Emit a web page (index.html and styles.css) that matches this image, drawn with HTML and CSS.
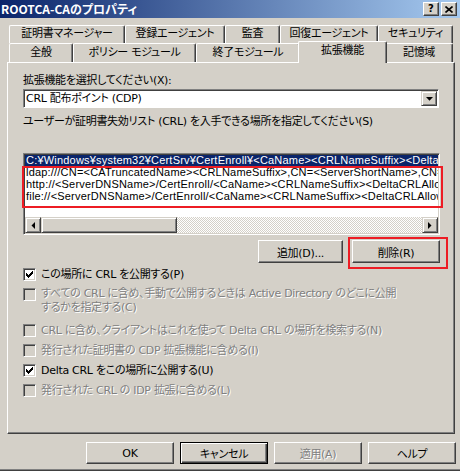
FILE: index.html
```html
<!DOCTYPE html>
<html lang="ja">
<head>
<meta charset="utf-8">
<title>ROOTCA-CAのプロパティ</title>
<link rel="stylesheet" href="styles.css">
</head>
<body>
<div class="window">
  <div class="titlebar">
    <span class="title">ROOTCA-CAのプロパティ</span>
    <div class="tbtns">
      <span class="tbtn">?</span>
      <span class="tbtn"><svg width="8" height="7" viewBox="0 0 8 7"><path d="M0.5 0.5 L7.5 6.5 M7.5 0.5 L0.5 6.5" stroke="#000" stroke-width="1.6" fill="none"/></svg></span>
    </div>
  </div>

  <div class="tabs">
    <div class="tabrow back">
      <div class="tab t-cert">証明書マネージャー</div>
      <div class="tab t-enroll">登録エージェント</div>
      <div class="tab t-audit">監査</div>
      <div class="tab t-recov">回復エージェント</div>
      <div class="tab t-sec">セキュリティ</div>
    </div>
    <div class="tabrow front">
      <div class="tab t-gen">全般</div>
      <div class="tab t-pol">ポリシー モジュール</div>
      <div class="tab t-exit">終了モジュール</div>
      <div class="tab sel">拡張機能</div>
      <div class="tab t-store">記憶域</div>
    </div>
  </div>

  <div class="panel">
    <div class="label">拡張機能を選択してください(X):</div>
    <div class="combo">
      <span class="combo-text">CRL 配布ポイント (CDP)</span>
      <span class="combo-btn"><svg width="7" height="4" viewBox="0 0 7 4"><polygon points="0,0 7,0 3.5,3.8" fill="#000"/></svg></span>
    </div>
    <div class="label label2">ユーザーが証明書失効リスト (CRL) を入手できる場所を指定してください(S)</div>

    <div class="list">
      <div class="rows">
        <div class="row selected">C:¥Windows¥system32¥CertSrv¥CertEnroll¥&lt;CaName&gt;&lt;CRLNameSuffix&gt;&lt;DeltaCRLAllowed&gt;.crl</div>
        <div class="row">ldap:///CN=&lt;CATruncatedName&gt;&lt;CRLNameSuffix&gt;,CN=&lt;ServerShortName&gt;,CN=CDP,CN=Public Key Services</div>
        <div class="row">http://&lt;ServerDNSName&gt;/CertEnroll/&lt;CaName&gt;&lt;CRLNameSuffix&gt;&lt;DeltaCRLAllowed&gt;.crl</div>
        <div class="row">file://&lt;ServerDNSName&gt;/CertEnroll/&lt;CaName&gt;&lt;CRLNameSuffix&gt;&lt;DeltaCRLAllowed&gt;.crl</div>
      </div>
      <div class="hscroll">
        <span class="sbtn"><svg width="4" height="7" viewBox="0 0 4 7"><polygon points="4,0 4,7 0.5,3.5" fill="#000"/></svg></span>
        <span class="thumb"></span>
        <span class="track"></span>
        <span class="sbtn"><svg width="4" height="7" viewBox="0 0 4 7"><polygon points="0,0 0,7 3.5,3.5" fill="#000"/></svg></span>
      </div>
      <div class="mark mark-list"></div>
    </div>

    <div class="btnrow">
      <span class="btn btn-add">追加(D)...</span>
      <span class="btn btn-del">削除(R)<span class="mark mark-del"></span></span>
    </div>

    <div class="checks">
      <div class="check c1">
        <span class="box"><svg width="7" height="7" viewBox="0 0 7 7"><path d="M0 2h1v1h1v1h1v-1h1v-1h1v-1h1v-1h1v3h-1v1h-1v1h-1v1h-1v1h-1v-1h-1v-1h-1z" fill="#000"/></svg></span>
        <span class="ctext">この場所に CRL を公開する(P)</span>
      </div>
      <div class="check c2 disabled">
        <span class="box"></span>
        <span class="ctext">すべての CRL に含め、手動で公開するときは Active Directory のどこに公開<br>するかを指定する(C)</span>
      </div>
      <div class="check disabled">
        <span class="box"></span>
        <span class="ctext">CRL に含め、クライアントはこれを使って Delta CRL の場所を検索する(N)</span>
      </div>
      <div class="check disabled">
        <span class="box"></span>
        <span class="ctext">発行された証明書の CDP 拡張機能に含める(I)</span>
      </div>
      <div class="check">
        <span class="box"><svg width="7" height="7" viewBox="0 0 7 7"><path d="M0 2h1v1h1v1h1v-1h1v-1h1v-1h1v-1h1v3h-1v1h-1v1h-1v1h-1v1h-1v-1h-1v-1h-1z" fill="#000"/></svg></span>
        <span class="ctext">Delta CRL をこの場所に公開する(U)</span>
      </div>
      <div class="check disabled">
        <span class="box"></span>
        <span class="ctext">発行された CRL の IDP 拡張に含める(L)</span>
      </div>
    </div>
  </div>

  <div class="footer">
    <span class="btn fbtn">OK</span>
    <span class="btn fbtn default">キャンセル</span>
    <span class="btn fbtn disabled-btn">適用(A)</span>
    <span class="btn fbtn">ヘルプ</span>
  </div>
</div>
</body>
</html>
```

FILE: styles.css
```css
* { box-sizing: border-box; }
html, body { margin: 0; padding: 0; }
body {
  width: 460px;
  height: 471px;
  overflow: hidden;
  background: #d4d0c8;
  font-family: "DejaVu Sans", "Noto Sans CJK JP", sans-serif;
  font-feature-settings: "palt";
  font-size: 11px;
  letter-spacing: -0.3px;
  color: #000;
}
.window {
  width: 460px;
  height: 471px;
  display: flex;
  flex-direction: column;
  box-shadow: inset 0 -1px #404040, inset 0 -2px #808080;
}

/* title bar */
.titlebar {
  height: 18px;
  flex: none;
  display: flex;
  align-items: center;
  justify-content: space-between;
  padding: 0 3px 0 1px;
  background: linear-gradient(to right, #0a246a, #a6caf0);
}
.title {
  color: #fff;
  font-family: "Noto Sans CJK JP", sans-serif;
  font-weight: bold;
  font-size: 12px;
  letter-spacing: 0;
  line-height: 16px;
  white-space: nowrap;
}
.tbtns { display: flex; gap: 2px; }
.tbtn {
  width: 16px;
  height: 14px;
  display: flex;
  align-items: center;
  justify-content: center;
  background: #d4d0c8;
  border: 1px solid;
  border-color: #fff #404040 #404040 #fff;
  box-shadow: inset -1px -1px #808080;
  font-family: "DejaVu Sans", sans-serif;
  font-weight: bold;
  font-size: 10px;
  letter-spacing: 0;
  line-height: 12px;
}

/* tabs */
.tabs { margin-top: 7px; flex: none; }
.tabrow { display: flex; padding-left: 9px; }
.back { height: 18px; }
.front { height: 19px; align-items: flex-end; }
.tab {
  flex: none;
  height: 18px;
  border: 1px solid;
  border-color: #fff #404040 transparent #fff;
  border-bottom: none;
  border-radius: 2px 2px 0 0;
  box-shadow: inset -1px 0 #808080;
  background: #d4d0c8;
  text-align: center;
  line-height: 16px;
  white-space: nowrap;
}
.front .tab { height: 19px; line-height: 17px; }
.t-cert { width: 116px; }
.t-enroll { width: 100px; }
.t-audit { width: 55px; }
.t-recov { width: 98px; }
.t-sec { width: 75px; }
.t-gen { width: 64px; }
.t-pol { width: 123px; }
.t-exit { width: 104px; }
.t-store { width: 68px; }
.front .tab.sel {
  position: relative;
  z-index: 1;
  width: 89px;
  height: 22px;
  margin: 0 -2px -1px -2px;
  line-height: 17px;
}

/* panel */
.panel {
  flex: none;
  margin-left: 7px;
  width: 448px;
  height: 372px;
  border: 1px solid;
  border-color: #fff #404040 #404040 #fff;
  box-shadow: inset -1px -1px #808080;
  padding: 11px 14px 0 15px;
}
.label { height: 13px; line-height: 13px; white-space: nowrap; }
.label2 { margin-top: 7px; }

.combo {
  margin-top: 2px;
  width: 416px;
  height: 19px;
  display: flex;
  align-items: center;
  justify-content: space-between;
  background: #fff;
  border: 1px solid;
  border-color: #808080 #fff #fff #808080;
  box-shadow: inset 1px 1px #404040;
  padding: 0 1px 0 2px;
}
.combo-text { line-height: 15px; }
.combo-btn {
  width: 16px;
  height: 15px;
  display: flex;
  align-items: center;
  justify-content: center;
  background: #d4d0c8;
  border: 1px solid;
  border-color: #d4d0c8 #404040 #404040 #d4d0c8;
  box-shadow: inset 1px 1px #fff, inset -1px -1px #808080;
}

.list {
  position: relative;
  margin-top: 25px;
  width: 417px;
  height: 82px;
  display: flex;
  flex-direction: column;
  background: #fff;
  border: 1px solid;
  border-color: #808080 #fff #fff #808080;
  box-shadow: inset 1px 1px #404040, inset -1px -1px #d4d0c8;
  padding: 1px;
}
.rows { flex: 1; overflow: hidden; }
.row {
  height: 12px;
  line-height: 12px;
  white-space: nowrap;
  overflow: hidden;
  padding-left: 1px;
  font-family: "Liberation Sans", "Noto Sans CJK JP", sans-serif;
  font-size: 11px;
  letter-spacing: 0.2px;
}
.row.selected { background: #0a246a; color: #fff; height: 11px; line-height: 11px; }
.hscroll { flex: none; height: 16px; display: flex; }
.sbtn {
  flex: none;
  width: 16px;
  height: 16px;
  display: flex;
  align-items: center;
  justify-content: center;
  background: #d4d0c8;
  border: 1px solid;
  border-color: #d4d0c8 #404040 #404040 #d4d0c8;
  box-shadow: inset 1px 1px #fff, inset -1px -1px #808080;
}
.thumb {
  flex: none;
  width: 136px;
  height: 16px;
  background: #d4d0c8;
  border: 1px solid;
  border-color: #d4d0c8 #404040 #404040 #d4d0c8;
  box-shadow: inset 1px 1px #fff, inset -1px -1px #808080;
}
.track {
  flex: 1;
  background-color: #d4d0c8;
  background-image: repeating-conic-gradient(#fff 0 25%, #d4d0c8 0 50%);
  background-size: 2px 2px;
}

.mark { position: absolute; border: 2px solid #ed1c24; pointer-events: none; }
.mark-list { left: -2px; right: -4px; top: 12px; height: 42px; }

.btnrow {
  margin-top: 5px;
  width: 417px;
  display: flex;
  justify-content: flex-end;
  gap: 9px;
}
.btn {
  position: relative;
  display: flex;
  align-items: center;
  justify-content: center;
  height: 23px;
  background: #d4d0c8;
  border: 1px solid;
  border-color: #fff #404040 #404040 #fff;
  box-shadow: inset -1px -1px #808080;
  white-space: nowrap;
}
.btn-add { width: 85px; }
.btn-del { width: 88px; }
.mark-del { left: -5px; right: -9px; top: -4px; bottom: -7px; }

.checks { margin-top: 5px; }
.check { display: flex; align-items: flex-start; height: 20px; }
.check.c2 { height: 36px; }
.box {
  flex: none;
  width: 13px;
  height: 13px;
  display: flex;
  align-items: center;
  justify-content: center;
  background: #fff;
  border: 1px solid;
  border-color: #808080 #fff #fff #808080;
  box-shadow: inset 1px 1px #404040, inset -1px -1px #d4d0c8;
}
.ctext { margin-left: 5px; line-height: 13px; white-space: nowrap; }
.c2 .ctext { line-height: 14px; margin-top: -1px; }
.disabled .box { background: #d4d0c8; }
.disabled .ctext, .disabled-btn { color: #808080; text-shadow: 1px 1px 0 #fff; }

.footer {
  flex: none;
  margin-top: 8px;
  display: flex;
  justify-content: flex-end;
  gap: 6px;
  padding-right: 4px;
}
.fbtn { width: 88px; height: 22px; }
.fbtn.default {
  border-color: #000;
  box-shadow: inset 1px 1px #fff, inset -1px -1px #404040, inset -2px -2px #808080;
}
```
